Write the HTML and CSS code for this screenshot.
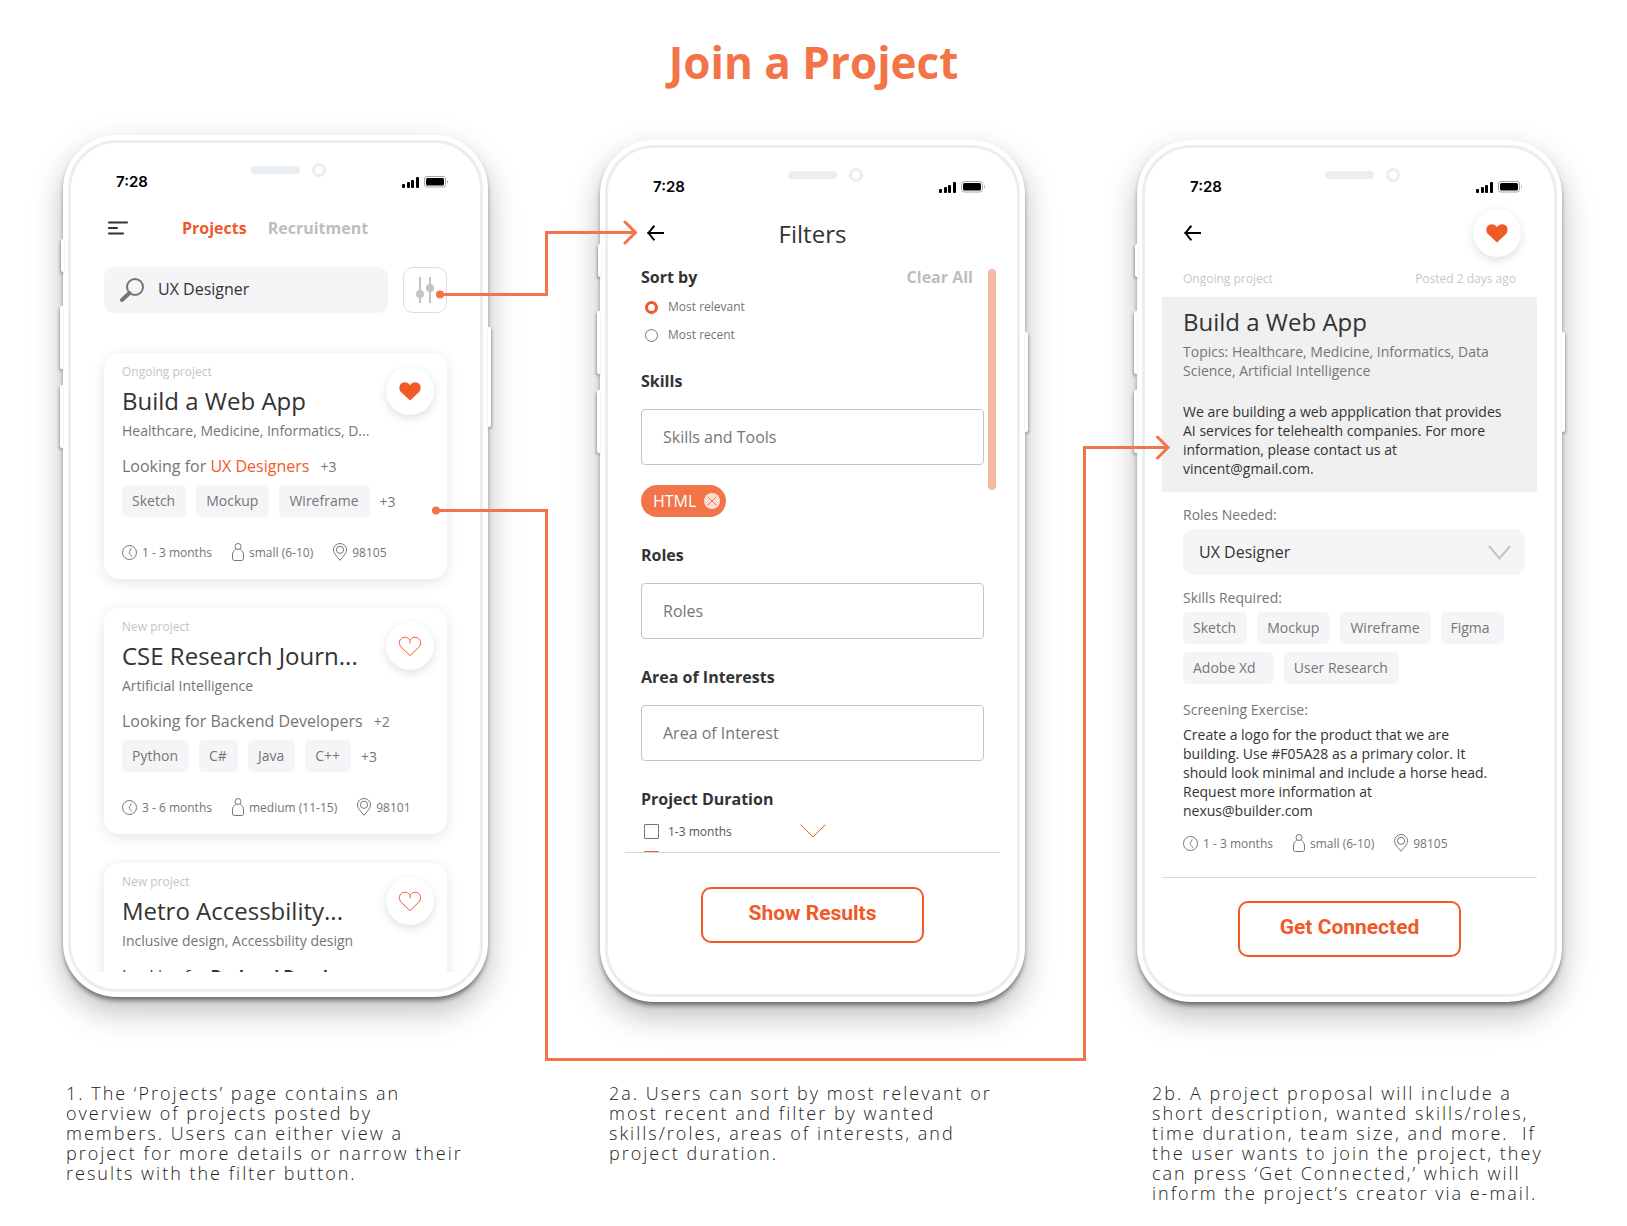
FILE: index.html
```html
<!DOCTYPE html>
<html lang="en">
<head>
<meta charset="utf-8">
<meta name="viewport" content="width=device-width, initial-scale=1">
<title>Join a Project</title>
<link rel="stylesheet" href="styles.css">
</head>
<body>
<svg class="sprite" aria-hidden="true">
  <symbol id="status" viewBox="0 0 47 12">
    <rect x="0" y="8" width="3" height="4" rx="1"/><rect x="5" y="6" width="3" height="6" rx="1"/><rect x="9" y="4" width="3" height="8" rx="1"/><rect x="14" y="1" width="3" height="11" rx="1"/>
    <rect x="22.5" y=".5" width="21" height="10.500" rx="2.500" fill="none" stroke="#a6a6a6"/>
    <rect x="24" y="2" width="18" height="7.500" rx="1.500"/>
    <path d="M45 4q2 1.700 0 3.600z" fill="#a6a6a6"/>
  </symbol>
  <symbol id="back" viewBox="0 0 17 16">
    <path d="M17 8H1.500M7.500 .8C5 2.500 3.500 6.500 1.200 8 3.500 9.500 5 13.500 7.500 15.200" fill="none" stroke="#000" stroke-width="2"/>
  </symbol>
  <symbol id="heart" viewBox="-1 -1 24 21">
    <path d="M11 18.600 2.200 10.200C-.4 7.400-.2 3.200 2.600 1.200 5.400-.6 9.300.2 11 3.300 12.700.2 16.600-.6 19.400 1.200 22.200 3.200 22.400 7.400 19.800 10.200Z"/>
  </symbol>
  <symbol id="heart-line" viewBox="-1 -1 24 21">
    <path d="M11 18.600 2.200 10.200C-.4 7.400-.2 3.200 2.600 1.200 5.400-.6 9.300.2 11 3.300 12.700.2 16.600-.6 19.400 1.200 22.200 3.200 22.400 7.400 19.800 10.200ZM11 3.300V6.500" fill="none" stroke="#f05a28"/>
  </symbol>
  <symbol id="clock" viewBox="0 0 15 15">
    <g fill="none" stroke="#757575"><circle cx="7.500" cy="7.500" r="7"/><path d="M9 3.500C8.800 5.500 7.200 6.500 7.200 7.500S8.500 10.200 10 11.500"/></g>
  </symbol>
  <symbol id="person" viewBox="0 0 12 18">
    <g fill="none" stroke="#757575"><circle cx="6" cy="3.500" r="3"/><path d="M3.800 6C1.800 7.500.5 9.500.5 12v3.500Q.5 17.500 2.500 17.500h7q2 0 2-2V12C11.500 9.500 10.200 7.500 8.200 6"/></g>
  </symbol>
  <symbol id="pin" viewBox="0 0 14 18">
    <g fill="none" stroke="#757575"><path d="M7 17.300C4.500 14 .5 10.500.5 6.800a6.500 6.300 0 0 1 13 0C13.500 10.500 9.500 14 7 17.300Z"/><circle cx="7" cy="6.800" r="3.600"/></g>
  </symbol>
</svg>

<header class="page-header"><h1>Join a Project</h1></header>

<main>
<div class="steps">

  <section class="step">
    <div class="phone">
      <i class="key key-mute"></i><i class="key key-up"></i><i class="key key-down"></i><i class="key key-power"></i>
      <div class="screen">
        <div class="status-bar">
          <span class="time">7:28</span>
          <span class="notch"><i class="speaker"></i><i class="camera"></i></span>
          <svg class="status-icons"><use href="#status"/></svg>
        </div>
        <nav class="top-bar top-bar-tabs">
          <button class="icon-button" aria-label="Menu">
            <svg width="20" height="14" viewBox="0 0 20 14"><path d="M1 1.500h18M1 7h8M1 12.500h14" stroke="#333" stroke-width="2" stroke-linecap="round"/></svg>
          </button>
          <div class="tabs"><a class="tab tab-active" href="#projects">Projects</a><a class="tab" href="#recruitment">Recruitment</a></div>
        </nav>
        <div class="search-row">
          <label class="search">
            <svg width="24" height="24" viewBox="0 0 24 24"><g fill="none" stroke="#757575"><circle cx="15" cy="9" r="8" stroke-width="2"/><path d="M9.500 15 2 22" stroke-width="4" stroke-linecap="round"/></g></svg>
            <input type="search" value="UX Designer" aria-label="Search projects">
          </label>
          <button class="filter-button" aria-label="Filters">
            <svg width="20" height="26" viewBox="0 0 20 26" fill="#c4c4c4"><path d="M4 0h2v26H4zM14 0h2v26h-2z"/><circle cx="5" cy="17" r="4"/><circle cx="15" cy="11" r="4"/></svg>
          </button>
        </div>
        <div class="card-list">
          <article class="card">
            <button class="like" aria-label="Unlike"><svg><use href="#heart"/></svg></button>
            <p class="card-status">Ongoing project</p>
            <h2 class="card-title">Build a Web App</h2>
            <p class="card-topics">Healthcare, Medicine, Informatics, D...</p>
            <p class="card-roles">Looking for <span class="match">UX Designers</span><span class="more">+3</span></p>
            <ul class="tags"><li class="tag">Sketch</li><li class="tag">Mockup</li><li class="tag">Wireframe</li><li class="more">+3</li></ul>
            <ul class="meta">
              <li><svg class="icon-clock"><use href="#clock"/></svg>1 - 3 months</li>
              <li><svg class="icon-person"><use href="#person"/></svg>small (6-10)</li>
              <li><svg class="icon-pin"><use href="#pin"/></svg>98105</li>
            </ul>
          </article>
          <article class="card">
            <button class="like" aria-label="Like"><svg><use href="#heart-line"/></svg></button>
            <p class="card-status">New project</p>
            <h2 class="card-title">CSE Research Journ...</h2>
            <p class="card-topics">Artificial Intelligence</p>
            <p class="card-roles">Looking for Backend Developers<span class="more">+2</span></p>
            <ul class="tags"><li class="tag">Python</li><li class="tag">C#</li><li class="tag">Java</li><li class="tag">C++</li><li class="more">+3</li></ul>
            <ul class="meta">
              <li><svg class="icon-clock"><use href="#clock"/></svg>3 - 6 months</li>
              <li><svg class="icon-person"><use href="#person"/></svg>medium (11-15)</li>
              <li><svg class="icon-pin"><use href="#pin"/></svg>98101</li>
            </ul>
          </article>
          <article class="card">
            <button class="like" aria-label="Like"><svg><use href="#heart-line"/></svg></button>
            <p class="card-status">New project</p>
            <h2 class="card-title">Metro Accessbility...</h2>
            <p class="card-topics">Inclusive design, Accessbility design</p>
            <p class="card-roles card-roles-dark">Looking for <b>Backend Developers</b><span class="more">+2</span></p>
          </article>
        </div>
      </div>
    </div>
    <svg class="link link-filter" width="203" height="80"><path d="M5 74.500H111.500V12.500H200M190 2 200.500 12.500 190 23"/><circle cx="5" cy="74.500" r="4"/></svg>
    <svg class="link link-card" width="118" height="561"><path d="M5 10.500H115.500V561"/><circle cx="5" cy="10.500" r="4"/></svg>
  </section>

  <section class="step step-low">
    <div class="phone">
      <i class="key key-mute"></i><i class="key key-up"></i><i class="key key-down"></i><i class="key key-power"></i>
      <div class="screen">
        <div class="status-bar">
          <span class="time">7:28</span>
          <span class="notch"><i class="speaker"></i><i class="camera"></i></span>
          <svg class="status-icons"><use href="#status"/></svg>
        </div>
        <div class="top-bar">
          <button class="icon-button" aria-label="Back"><svg width="17" height="16"><use href="#back"/></svg></button>
          <h2 class="screen-title">Filters</h2>
        </div>
        <div class="filters">
          <form class="filter-form">
            <fieldset class="group">
              <legend class="group-title">Sort by</legend>
              <label class="option"><input type="radio" name="sort" checked>Most relevant</label>
              <label class="option"><input type="radio" name="sort">Most recent</label>
            </fieldset>
            <div class="group">
              <label class="group-title" for="skills">Skills</label>
              <input class="field" id="skills" type="text" placeholder="Skills and Tools">
              <span class="chip">HTML<button type="button" aria-label="Remove HTML"><svg width="16" height="16" viewBox="0 0 16 16"><circle cx="8" cy="8" r="8" fill="#fbded3"/><path d="M4 4l8 8M12 4l-8 8" stroke="#f37449"/></svg></button></span>
            </div>
            <div class="group">
              <label class="group-title" for="roles">Roles</label>
              <input class="field" id="roles" type="text" placeholder="Roles">
            </div>
            <div class="group">
              <label class="group-title" for="area">Area of Interests</label>
              <input class="field" id="area" type="text" placeholder="Area of Interest">
            </div>
            <fieldset class="group group-checks">
              <legend class="group-title">Project Duration</legend>
              <label class="option"><input type="checkbox">1-3 months</label>
              <label class="option"><input type="checkbox" checked>3-6 months</label>
            </fieldset>
            <button class="clear-all" type="reset">Clear All</button>
          </form>
          <i class="scroll-thumb"></i>
          <button class="scroll-more" aria-label="Scroll down"><svg width="26" height="14" viewBox="0 0 26 14"><path d="M.7.700 13 13 25.300.700" fill="none" stroke="#f05a28"/></svg></button>
        </div>
        <div class="action-bar action-bar-tall"><button class="action">Show Results</button></div>
      </div>
    </div>
    <i class="link-bar"></i>
  </section>

  <section class="step step-low">
    <div class="phone">
      <i class="key key-mute"></i><i class="key key-up"></i><i class="key key-down"></i><i class="key key-power"></i>
      <div class="screen">
        <div class="status-bar">
          <span class="time">7:28</span>
          <span class="notch"><i class="speaker"></i><i class="camera"></i></span>
          <svg class="status-icons"><use href="#status"/></svg>
        </div>
        <div class="top-bar">
          <button class="icon-button" aria-label="Back"><svg width="17" height="16"><use href="#back"/></svg></button>
          <button class="like" aria-label="Unlike"><svg><use href="#heart"/></svg></button>
        </div>
        <div class="proposal">
          <div class="posted"><span>Ongoing project</span><span>Posted 2 days ago</span></div>
          <div class="summary">
            <h2 class="card-title">Build a Web App</h2>
            <p class="topics">Topics: Healthcare, Medicine, Informatics, Data Science, Artificial Intelligence</p>
            <p class="body-text">We are building a web appplication that provides AI services for telehealth companies. For more information, please contact us at vincent@gmail.com.</p>
          </div>
          <div class="details">
            <label class="detail-label" for="role">Roles Needed:</label>
            <div class="select">
              <select id="role"><option>UX Designer</option></select>
              <svg width="23" height="15" viewBox="0 0 23 15"><path d="M1 1 11.500 13.500 22 1" fill="none" stroke="#c4c4c4" stroke-width="2"/></svg>
            </div>
            <h3 class="detail-label detail-heading">Skills Required:</h3>
            <ul class="tags tags-wrap"><li class="tag">Sketch</li><li class="tag">Mockup</li><li class="tag">Wireframe</li><li class="tag">Figma&nbsp;</li><li class="tag">Adobe Xd&nbsp;&nbsp;</li><li class="tag">User Research</li></ul>
            <h3 class="detail-label detail-heading-wide">Screening Exercise:</h3>
            <p class="body-text exercise">Create a logo for the product that we are building. Use #F05A28 as a primary color. It should look minimal and include a horse head. Request more information at nexus@builder.com</p>
            <ul class="meta">
              <li><svg class="icon-clock"><use href="#clock"/></svg>1 - 3 months</li>
              <li><svg class="icon-person"><use href="#person"/></svg>small (6-10)</li>
              <li><svg class="icon-pin"><use href="#pin"/></svg>98105</li>
            </ul>
          </div>
        </div>
        <div class="action-bar"><button class="action">Get Connected</button></div>
      </div>
    </div>
    <svg class="link link-proposal" width="88" height="626"><path d="M2.500 624V12.500H86M75.500 2 86 12.500 75.500 23"/></svg>
  </section>
</div>

<div class="captions">
  <p>1. The ‘Projects’ page contains an overview of projects posted by members. Users can either view a project for more details or narrow their results with the filter button.</p>
  <p>2a. Users can sort by most relevant or most recent and filter by wanted skills/roles, areas of interests, and project duration.</p>
  <p>2b. A project proposal will include a short description, wanted skills/roles, time duration, team size, and more.&nbsp; If the user wants to join the project, they can press ‘Get Connected,’ which will inform the project’s creator via e-mail.</p>
</div>
</main>
</body>
</html>
```
FILE: styles.css
```css
* { box-sizing: border-box; }

:root {
  --orange: #f05a28;
  --coral: #f37449;
  --ink: #333;
  --gray: #757575;
  --pale: #bdbdbd;
  --fill: #f5f5f7;
  --frame: #e8eef1;
}

body {
  margin: 0;
  background: #fff;
  color: var(--ink);
  font-family: "Open Sans", "Noto Sans", sans-serif;
  font-size: 14px;
  line-height: 19px;
}

h1, h2, h3, p, ul, fieldset { margin: 0; padding: 0; }
ul { list-style: none; }
fieldset { border: 0; min-width: 0; }
legend { padding: 0; }
svg { display: block; flex: none; }
button, input, select { font: inherit; color: inherit; margin: 0; }
button { border: 0; padding: 0; background: none; cursor: pointer; }
.sprite { position: absolute; width: 0; height: 0; }

.page-header { padding: 32px 0 43px; text-align: center; }
.page-header h1 { font-size: 44px; line-height: 60px; font-weight: 700; color: var(--coral); }

.steps {
  display: grid;
  grid-template-columns: repeat(3, minmax(425px, 1fr));
  gap: 112px;
  padding: 0 65px 0 63px;
}
.step { position: relative; }
.step-low { padding-top: 5px; }

/* Device frame */
.phone {
  position: relative;
  height: 862px;
  padding: 5px;
  border-radius: 54px;
  background: #fff;
  box-shadow: 0 4px 5px -1px rgba(0, 0, 0, .5), 0 14px 32px rgba(0, 0, 0, .26);
}
.screen {
  position: relative;
  display: flex;
  flex-direction: column;
  height: 100%;
  border: 3px solid var(--frame);
  border-radius: 49px;
  background: #fff;
}
.key {
  position: absolute;
  left: -3px;
  width: 3px;
  height: 63px;
  border-radius: 2px 0 0 2px;
  background: #fff;
  box-shadow: -1px 2px 3px rgba(0, 0, 0, .3);
}
.key-mute { top: 104px; height: 33px; left: -2px; }
.key-up { top: 171px; }
.key-down { top: 250px; }
.key-power { top: 192px; left: auto; right: -3px; height: 100px; border-radius: 0 2px 2px 0; box-shadow: 1px 2px 3px rgba(0, 0, 0, .3); }

.status-bar {
  display: grid;
  grid-template-columns: 1fr auto 1fr;
  align-items: end;
  height: 48px;
  padding: 20px 31px 0;
}
.time { padding-left: 14px; font: 600 15px/18px Inter, sans-serif; color: #000; }
.notch { display: flex; align-items: center; align-self: start; gap: 12px; padding-left: 26px; }
.speaker { width: 49px; height: 8px; border-radius: 4px; background: var(--frame); }
.camera { width: 14px; height: 14px; border: 3px solid var(--frame); border-radius: 50%; }
.status-icons { width: 47px; height: 12px; margin-bottom: 3px; justify-self: end; }

.top-bar {
  position: relative;
  display: flex;
  align-items: center;
  justify-content: space-between;
  height: 48px;
  margin-top: 13px;
  padding: 0 33px 0 39px;
}
.top-bar-tabs { justify-content: flex-start; gap: 54px; padding-left: 37px; }
.tabs { display: flex; gap: 21px; }
.tab { font-size: 16px; line-height: 22px; font-weight: 700; color: var(--pale); text-decoration: none; }
.tab-active { color: var(--orange); }
.screen-title { position: absolute; inset: 9px 0 auto; font-size: 24px; line-height: 32px; font-weight: 400; text-align: center; pointer-events: none; }

/* Project list */
.search-row { display: flex; gap: 15px; margin-top: 15px; padding: 0 33px; }
.search { display: flex; flex: 1; align-items: center; gap: 14px; height: 46px; padding: 0 16px; border-radius: 10px; background: var(--fill); }
.search input { flex: 1; min-width: 0; padding: 0 0 2px; border: 0; outline: 0; background: none; font-size: 16px; line-height: 22px; appearance: none; }
.filter-button { display: grid; place-items: center; width: 44px; height: 46px; border: 1px solid #dcdcdc; border-radius: 10px; background: #fff; }

.card-list {
  display: flex;
  flex: 1;
  flex-direction: column;
  gap: 29px;
  min-height: 0;
  margin-bottom: 17px;
  padding: 40px 33px 0;
  overflow: hidden;
}
.card { position: relative; flex: none; height: 226px; padding: 11px 18px 0; border-radius: 15px; background: #fff; box-shadow: 0 3px 14px rgba(0, 0, 0, .11); }
.card .like { position: absolute; top: 14px; right: 13px; }
.card-status { font-size: 12px; line-height: 16px; color: #c4c4c4; }
.card-title { font-size: 24px; line-height: 32px; font-weight: 400; }
.card .card-title { margin-top: 5px; }
.card-topics { margin-top: 4px; line-height: 20px; color: var(--gray); }
.card-roles { margin-top: 14px; font-size: 16px; line-height: 22px; color: var(--gray); }
.card-roles-dark { color: var(--ink); }
.match { color: var(--orange); }
.more { font-size: 14px; color: var(--gray); }
.card-roles .more { margin-left: 11px; }

.tags { display: flex; align-items: center; gap: 10px; margin-top: 7px; }
.tag { padding: 0 11px 0 10px; border-radius: 5px; background: var(--fill); line-height: 32px; color: var(--gray); }
.tags-wrap { flex-wrap: wrap; gap: 8px 10px; margin-top: 5px; }

.meta { display: flex; align-items: center; gap: 20px; height: 18px; font-size: 12px; color: var(--gray); }
.meta li { display: flex; align-items: center; gap: 5px; }
.card .meta { margin-top: 26px; }
.icon-clock { width: 15px; height: 15px; }
.icon-person { width: 12px; height: 18px; }
.icon-pin { width: 14px; height: 18px; }

.like { display: grid; place-items: center; width: 48px; height: 48px; border-radius: 50%; background: #fff; box-shadow: 0 3px 10px rgba(0, 0, 0, .13); }
.like svg { width: 24px; height: 21px; fill: var(--orange); }

/* Filters */
.filters { position: relative; display: flex; flex: 1; gap: 4px; min-height: 0; padding: 9px 21px 0 33px; overflow: hidden; }
.filter-form { position: relative; flex: 1; }
.group { display: flex; flex-direction: column; align-items: flex-start; margin-bottom: 27px; }
.group:first-child { margin-bottom: 21px; }
.group-title { margin-bottom: 5px; font-size: 16px; line-height: 22px; font-weight: 700; }
label.group-title { margin-bottom: 17px; }
.group-checks .group-title { margin-bottom: 8px; }
.option { display: flex; align-items: center; gap: 10px; height: 28px; padding-left: 4px; font-size: 12px; line-height: 16px; color: var(--gray); }
.group-checks .option { height: 27px; padding-left: 3px; gap: 9px; color: #555; }
.option input { appearance: none; width: 13px; height: 13px; border: 1px solid var(--gray); border-radius: 50%; background: #fff; }
.option input:checked { border: 3px solid var(--orange); }
.option input[type="checkbox"] { width: 15px; height: 15px; border-radius: 1px; }
.clear-all { position: absolute; top: 0; right: 11px; font-size: 16px; line-height: 22px; font-weight: 700; color: var(--pale); }
.field { width: 100%; height: 56px; padding: 0 21px; border: 1px solid #c4c4c4; border-radius: 4px; background: #fff; font-size: 16px; }
.field::placeholder { color: var(--gray); opacity: 1; }
.chip { display: flex; align-items: center; gap: 8px; height: 32px; margin-top: 20px; padding: 0 6px 0 12px; border-radius: 16px; background: var(--coral); font-size: 16px; line-height: 22px; color: #fff; }
.scroll-thumb { width: 8px; height: 221px; margin-top: 3px; border-radius: 4px; background: #f8b8a2; }
.scroll-more { position: absolute; bottom: 14px; left: 50%; margin-left: -13px; }

.action-bar { display: flex; justify-content: center; margin: 0 17px; padding: 23px 0 37px; border-top: 1px solid #dadada; }
.action-bar-tall { padding: 34px 0 51px; }
.action { width: 223px; height: 56px; padding-bottom: 4px; border: 2px solid var(--orange); border-radius: 10px; font: 700 21px/24px Roboto, sans-serif; color: var(--orange); }

/* Proposal */
.proposal { flex: 1; padding-top: 14px; }
.posted { display: flex; justify-content: space-between; padding: 0 38px 10px; font-size: 12px; line-height: 16px; color: #c8c8c8; }
.summary { margin: 0 17px; padding: 9px 30px 14px 21px; background: #f0f0f0; }
.topics { margin: 4px 0 22px; color: var(--gray); }
.details { padding: 13px 29px 0 38px; }
.detail-label { display: block; font-size: 14px; line-height: 19px; font-weight: 400; color: var(--gray); }
.detail-heading { margin-top: 13px; }
.detail-heading-wide { margin: 16px 0 6px; }
.select { position: relative; margin-top: 5px; }
.select select { display: block; width: 100%; height: 46px; padding: 0 48px 0 16px; border: 0; border-radius: 10px; background: var(--fill); font-size: 16px; appearance: none; }
.select svg { position: absolute; top: 16px; right: 14px; pointer-events: none; }
.exercise { max-width: 312px; margin-bottom: 14px; }

/* Arrows between the screens, anchored to the gutters */
.link { position: absolute; z-index: 2; overflow: visible; fill: none; stroke: var(--coral); stroke-width: 3; stroke-linecap: round; pointer-events: none; }
.link circle { fill: var(--coral); stroke: none; }
.link-filter { top: 85px; left: calc(100% - 53px); }
.link-card { top: 365px; left: calc(100% - 57px); stroke-linecap: butt; }
.link-proposal { top: 300px; left: -55px; }
.link-bar { position: absolute; z-index: 2; top: 923px; left: -55px; right: -61px; height: 3px; background: var(--coral); }

.captions {
  display: grid;
  grid-template-columns: repeat(3, 1fr);
  gap: 138px;
  padding: 81px 70px 23px 66px;
  font-size: 18px;
  line-height: 20px;
  font-weight: 300;
  letter-spacing: 2px;
  color: #222;
}
```
